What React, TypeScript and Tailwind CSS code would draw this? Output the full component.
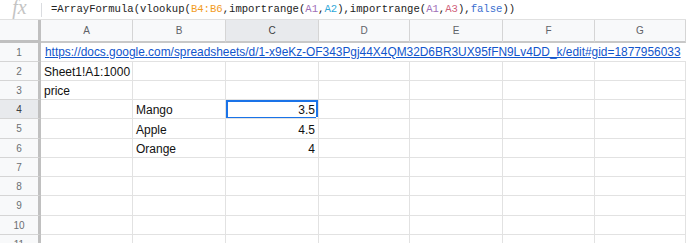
const cols = ["A", "B", "C", "D", "E", "F", "G"];

const rowHeights = ["h-[19px]", "h-[19px]", "h-[19px]", "h-[19px]", "h-[20px]", "h-[19px]", "h-[19px]", "h-[19px]", "h-[20px]", "h-[19px]", "h-[19px]"];

const data: Record<number, (string | null)[]> = {
  2: ["Sheet1!A1:1000", null, null],
  3: ["price", null, null],
  4: [null, "Mango", "3.5"],
  5: [null, "Apple", "4.5"],
  6: [null, "Orange", "4"],
};

function FormulaBar() {
  return (
    <div className="flex h-[20px] items-center border-b border-[#e0e0e0] bg-white">
      <div className="flex w-[41px] shrink-0 items-center justify-center">
        <span className="-mt-[6px] ml-[-2px] text-[20px] italic leading-none text-[#c4c4c4] [font-family:'Liberation_Serif',serif]">
          fx
        </span>
      </div>
      <div className="h-[14px] w-px bg-[#dadce0]" />
      <div className="pl-[9px] text-[10.6px] whitespace-nowrap text-[#222] [font-family:'Liberation_Mono',monospace]">
        {"=ArrayFormula(vlookup("}
        <span className="text-[#f29b1e]">B4:B6</span>
        {",importrange("}
        <span className="text-[#a070b8]">A1</span>
        {","}
        <span className="text-[#2fa8d8]">A2</span>
        {"),importrange("}
        <span className="text-[#a070b8]">A1</span>
        {","}
        <span className="text-[#d0607a]">A3</span>
        {"),"}
        <span className="text-[#3b6fd0]">false</span>
        {"))"}
      </div>
    </div>
  );
}

function Cell({ text, align, selected }: { text: string | null; align: "left" | "right"; selected?: boolean }) {
  return (
    <div
      className={`relative flex items-end overflow-hidden border-r border-b border-[#e2e2e2] px-[3px] pb-[2px] text-[12px] leading-none text-[#111] [font-family:'Liberation_Sans',Arial,sans-serif] ${
        align === "right" ? "justify-end" : "justify-start"
      }`}
    >
      <span className="whitespace-nowrap">{text}</span>
      {selected && (
        <>
          <div className="pointer-events-none absolute inset-[0px_0px_-1px_0px] border-2 border-[#1a73e8]" />
          <div className="absolute right-[-4px] bottom-[-5px] z-10 h-[6px] w-[6px] border border-white bg-[#1a73e8]" />
        </>
      )}
    </div>
  );
}

export default function App() {
  return (
    <div className="h-[243px] w-[686px] overflow-hidden bg-white">
      <FormulaBar />
      <div className="grid grid-cols-[41px_92px_93px_93px_91px_93px_92px_1fr]">
        <div className="h-[23px] border-r-[3px] border-b-[3px] border-[#c0c0c0] bg-[#f8f9fa]" />
        {cols.map((c) => (
          <div
            key={c}
            className={`flex h-[23px] items-center justify-center border-r border-b-2 border-r-[#d5d5d5] border-b-[#c8c8c8] text-[10px] [font-family:'Liberation_Sans',Arial,sans-serif] ${
              c === "C" ? "bg-[#e8eaed] text-[#3c4043]" : "bg-[#f8f9fa] text-[#5f6368]"
            }`}
          >
            {c}
          </div>
        ))}

        {rowHeights.map((h, i) => {
          const r = i + 1;
          const vals = data[r] ?? [null, null, null];
          return (
            <div key={r} className="contents">
              <div
                className={`flex ${h} items-center justify-center border-r-[3px] border-b border-r-[#c0c0c0] border-b-[#d5d5d5] text-[10px] [font-family:'Liberation_Sans',Arial,sans-serif] ${
                  r === 4 ? "bg-[#e8eaed] text-[#3c4043]" : "bg-[#f8f9fa] text-[#6b6f73]"
                }`}
              >
                {r}
              </div>
              {r === 1 ? (
                <div className="col-span-7 flex items-end border-b border-[#e2e2e2] px-[4px] pb-[2px] text-[11.9px] leading-none [font-family:'Liberation_Sans',Arial,sans-serif]">
                  <span className="whitespace-nowrap text-[#1155cc] underline">
                    https://docs.google.com/spreadsheets/d/1-x9eKz-OF343Pgj44X4QM32D6BR3UX95fFN9Lv4DD_k/edit#gid=1877956033
                  </span>
                </div>
              ) : (
                <>
                  <Cell text={vals[0]} align="left" />
                  <Cell text={vals[1]} align="left" />
                  <Cell text={vals[2]} align="right" selected={r === 4} />
                  <Cell text={null} align="left" />
                  <Cell text={null} align="left" />
                  <Cell text={null} align="left" />
                  <Cell text={null} align="left" />
                </>
              )}
            </div>
          );
        })}
      </div>
    </div>
  );
}
